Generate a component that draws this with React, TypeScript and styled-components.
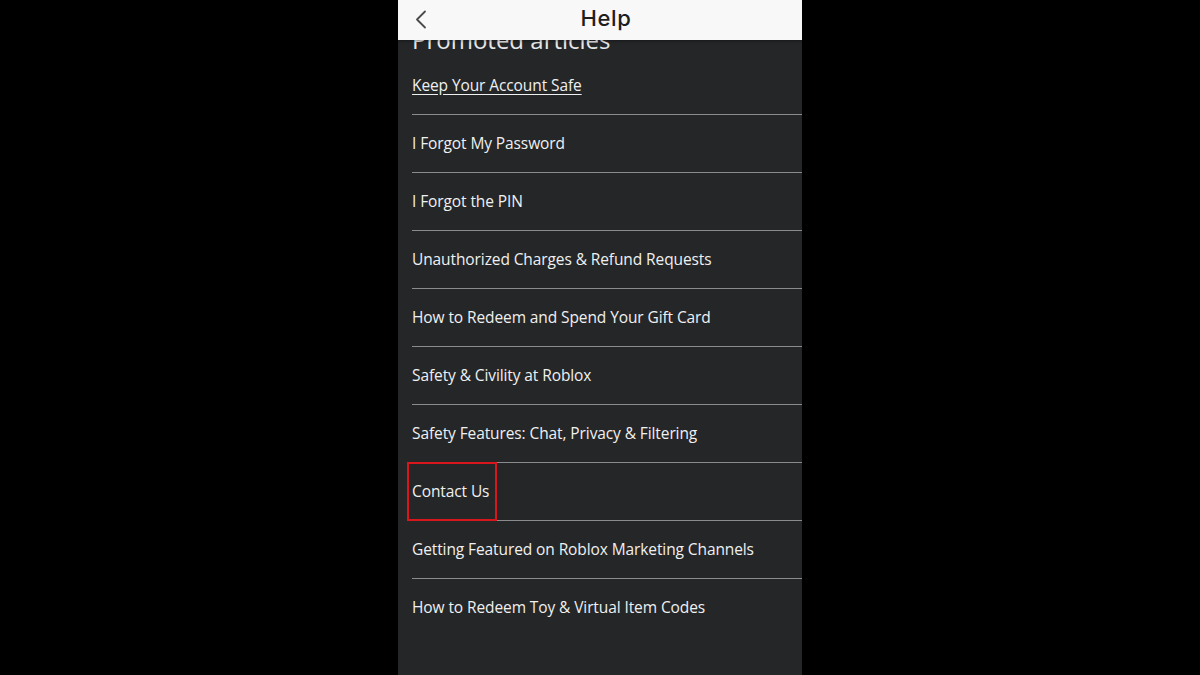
import styled, { createGlobalStyle } from 'styled-components';

const GlobalStyle = createGlobalStyle`
  html, body {
    margin: 0;
    padding: 0;
    background: #000;
    height: 100%;
  }
  #root {
    height: 100%;
  }
`;

const Stage = styled.div`
  width: 1200px;
  height: 675px;
  display: flex;
  justify-content: center;
  background: #000;
  overflow: hidden;
`;

const Phone = styled.div`
  position: relative;
  width: 404px;
  height: 675px;
  background: #242628;
  overflow: hidden;
  font-family: 'Open Sans', 'Noto Sans', sans-serif;
`;

const Header = styled.header`
  position: absolute;
  top: 0;
  left: 0;
  right: 0;
  height: 40px;
  display: flex;
  align-items: center;
  justify-content: center;
  background: #f8f8f8;
  box-shadow: 0 1px 3px rgba(0, 0, 0, 0.35);
  z-index: 2;
`;

const BackButton = styled.button`
  position: absolute;
  left: 12px;
  top: 8px;
  width: 22px;
  height: 22px;
  padding: 0;
  border: 0;
  background: none;
  display: grid;
  place-items: center;
`;

const Title = styled.h1`
  margin: 0 0 4px 12px;
  color: #1e1e1e;
  font-family: 'Inter', 'Liberation Sans', sans-serif;
  font-size: 22px;
  font-weight: 500;
  letter-spacing: 0.6px;
`;

const Content = styled.div`
  padding: 24px 0 0 14px;
`;

const SectionTitle = styled.h2`
  margin: 0;
  height: 33px;
  color: #e8e8e8;
  font-size: 24px;
  font-weight: 400;
  line-height: 32px;
`;

const List = styled.ul`
  margin: 0;
  padding: 0;
  list-style: none;
`;

const Item = styled.li<{ $last?: boolean }>`
  position: relative;
  height: 57px;
  display: flex;
  align-items: center;
  border-bottom: ${({ $last }) => ($last ? '0' : '1px solid #8a8b8c')};
`;

const ItemLink = styled.a<{ $underline?: boolean }>`
  margin-top: -1px;
  color: #f0f0f0;
  font-size: 15.5px;
  letter-spacing: -0.1px;
  text-decoration: ${({ $underline }) => ($underline ? 'underline' : 'none')};
  text-underline-offset: 3px;
`;

const Highlight = styled.span`
  position: absolute;
  left: -5px;
  top: -1px;
  width: 90px;
  height: 59px;
  box-sizing: border-box;
  border: 2px solid #d8161b;
  pointer-events: none;
`;

const articles = [
  'Keep Your Account Safe',
  'I Forgot My Password',
  'I Forgot the PIN',
  'Unauthorized Charges & Refund Requests',
  'How to Redeem and Spend Your Gift Card',
  'Safety & Civility at Roblox',
  'Safety Features: Chat, Privacy & Filtering',
  'Contact Us',
  'Getting Featured on Roblox Marketing Channels',
  'How to Redeem Toy & Virtual Item Codes',
];

export default function App() {
  return (
    <>
      <GlobalStyle />
      <Stage>
        <Phone>
          <Header>
            <BackButton aria-label="Back">
              <svg width="12" height="19" viewBox="0 0 12 19" fill="none">
                <path d="M10 1.5 2 9.5l8 8" stroke="#4a4a4a" strokeWidth="1.8" strokeLinecap="round" strokeLinejoin="round" />
              </svg>
            </BackButton>
            <Title>Help</Title>
          </Header>
          <Content>
            <SectionTitle>Promoted articles</SectionTitle>
            <List>
              {articles.map((title, i) => (
                <Item key={title} $last={i === articles.length - 1}>
                  <ItemLink $underline={i === 0}>{title}</ItemLink>
                  {title === 'Contact Us' && <Highlight />}
                </Item>
              ))}
            </List>
          </Content>
        </Phone>
      </Stage>
    </>
  );
}
